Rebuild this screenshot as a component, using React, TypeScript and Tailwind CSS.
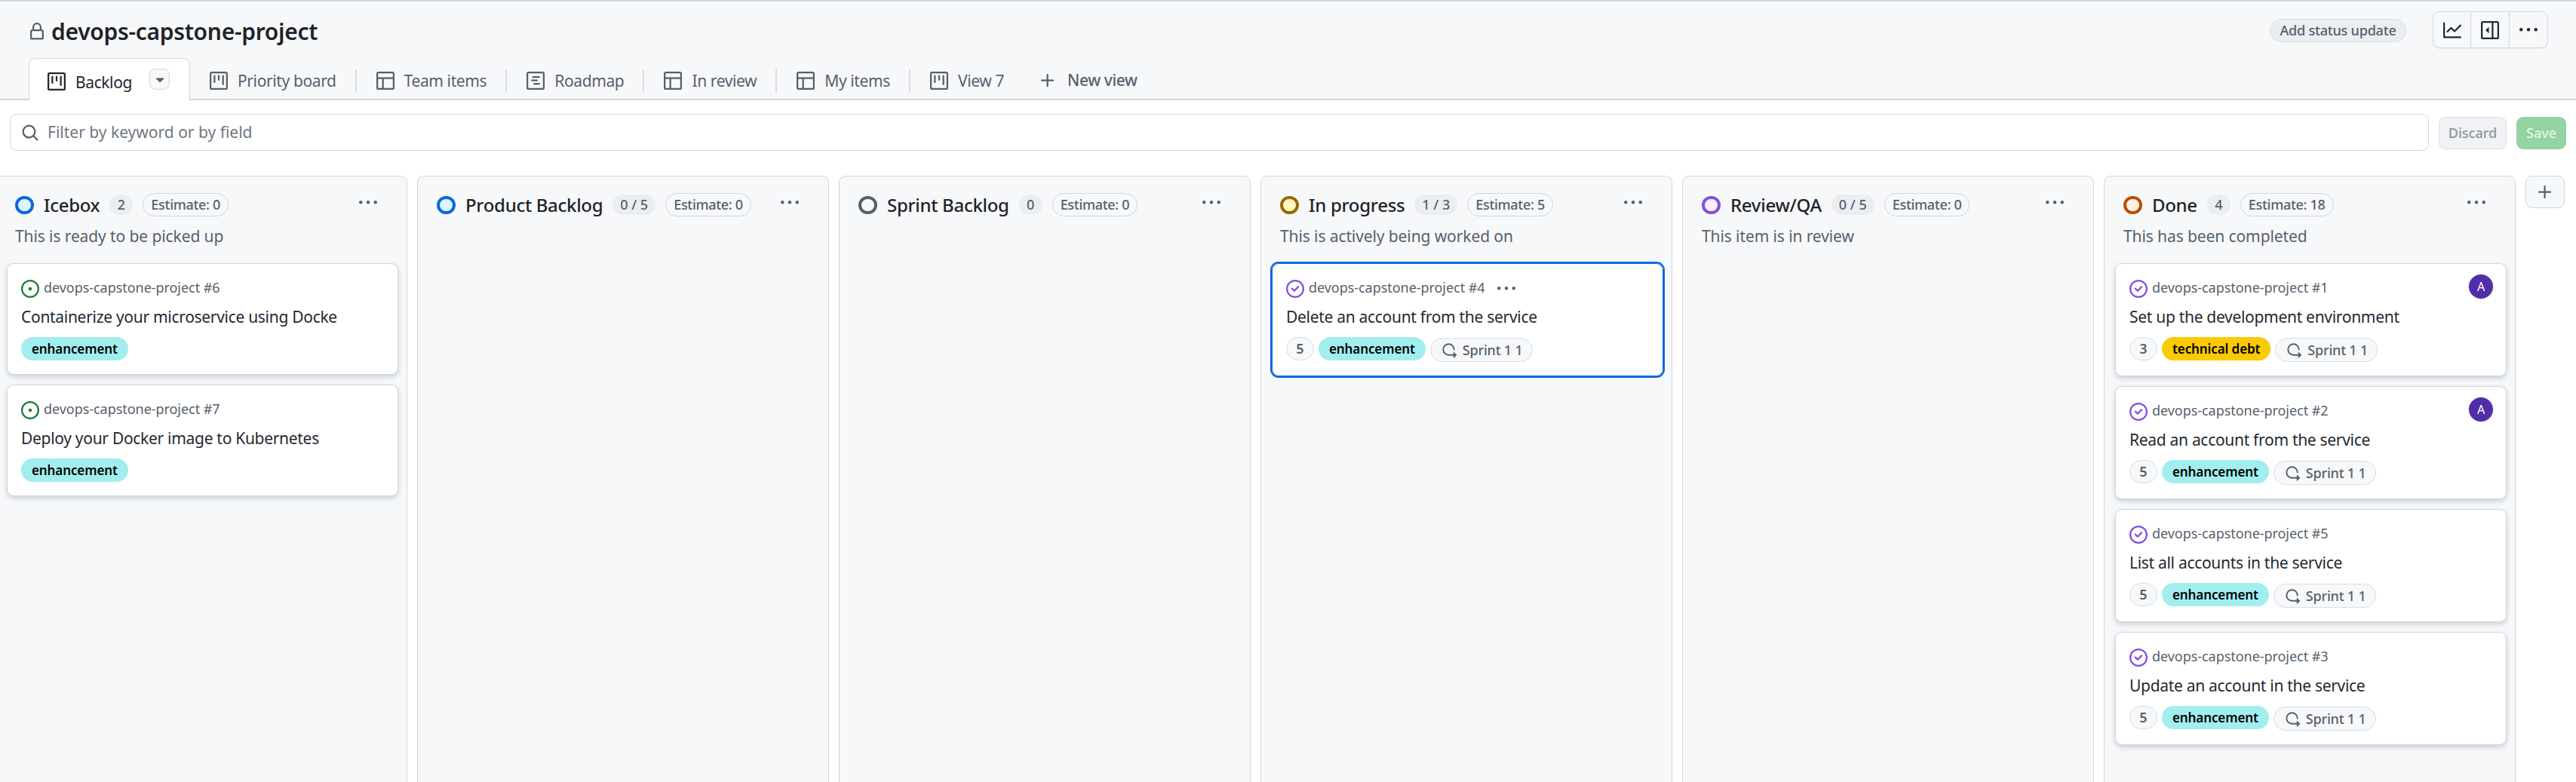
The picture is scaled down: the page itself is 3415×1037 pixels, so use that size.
import React from "react";

const P = {
  lock: "M4 4a4 4 0 0 1 8 0v2h.25c.966 0 1.75.784 1.75 1.75v5.5A1.75 1.75 0 0 1 12.25 15h-8.5A1.75 1.75 0 0 1 2 13.25v-5.5C2 6.784 2.784 6 3.75 6H4Zm8.25 3.5h-8.5a.25.25 0 0 0-.25.25v5.5c0 .138.112.25.25.25h8.5a.25.25 0 0 0 .25-.25v-5.5a.25.25 0 0 0-.25-.25ZM10.5 6V4a2.5 2.5 0 1 0-5 0v2Z",
  board: "M1.75 0h12.5C15.216 0 16 .784 16 1.75v12.5A1.75 1.75 0 0 1 14.25 16H1.75A1.75 1.75 0 0 1 0 14.25V1.75C0 .784.784 0 1.75 0ZM1.5 1.75v12.5c0 .138.112.25.25.25h12.5a.25.25 0 0 0 .25-.25V1.75a.25.25 0 0 0-.25-.25H1.75a.25.25 0 0 0-.25.25ZM11.75 3a.75.75 0 0 1 .75.75v7.5a.75.75 0 0 1-1.5 0v-7.5a.75.75 0 0 1 .75-.75Zm-8.25.75a.75.75 0 0 1 1.5 0v5.5a.75.75 0 0 1-1.5 0ZM8 3a.75.75 0 0 1 .75.75v3.5a.75.75 0 0 1-1.5 0v-3.5A.75.75 0 0 1 8 3Z",
  table: "M0 1.75C0 .784.784 0 1.75 0h12.5C15.216 0 16 .784 16 1.75v12.5A1.75 1.75 0 0 1 14.25 16H1.75A1.75 1.75 0 0 1 0 14.25ZM6.5 6.5v8h7.75a.25.25 0 0 0 .25-.25V6.5Zm8-1.5V1.75a.25.25 0 0 0-.25-.25H1.75a.25.25 0 0 0-.25.25V5Zm-13 1.5v7.75c0 .138.112.25.25.25H5v-8Z",
  roadmap: "M4.75 7a.75.75 0 0 0 0 1.5h4.5a.75.75 0 0 0 0-1.5h-4.5ZM5 4.75A.75.75 0 0 1 5.75 4h5.5a.75.75 0 0 1 0 1.5h-5.5A.75.75 0 0 1 5 4.75ZM6.75 10a.75.75 0 0 0 0 1.5h4.5a.75.75 0 0 0 0-1.5h-4.5ZM0 1.75C0 .784.784 0 1.75 0h12.5C15.216 0 16 .784 16 1.75v12.5A1.75 1.75 0 0 1 14.25 16H1.75A1.75 1.75 0 0 1 0 14.25Zm1.75-.25a.25.25 0 0 0-.25.25v12.5c0 .138.112.25.25.25h12.5a.25.25 0 0 0 .25-.25V1.75a.25.25 0 0 0-.25-.25Z",
  search: "M10.68 11.74a6 6 0 0 1-7.922-8.982 6 6 0 0 1 8.982 7.922l3.04 3.04a.749.749 0 0 1-.326 1.275.749.749 0 0 1-.734-.215ZM11.5 7a4.499 4.499 0 1 0-8.997 0A4.499 4.499 0 0 0 11.5 7Z",
  plus: "M7.75 2a.75.75 0 0 1 .75.75V7h4.25a.75.75 0 0 1 0 1.5H8.5v4.25a.75.75 0 0 1-1.5 0V8.5H2.75a.75.75 0 0 1 0-1.5H7V2.75A.75.75 0 0 1 7.75 2Z",
  graph: "M1.5 1.75V13.5h13.75a.75.75 0 0 1 0 1.5H.75a.75.75 0 0 1-.75-.75V1.75a.75.75 0 0 1 1.5 0Zm14.28 2.53-5.25 5.25a.75.75 0 0 1-1.06 0L7 7.06 4.28 9.78a.751.751 0 0 1-1.042-.018.751.751 0 0 1-.018-1.042l3.25-3.25a.75.75 0 0 1 1.06 0L10 7.94l4.72-4.72a.751.751 0 0 1 1.042.018.751.751 0 0 1 .018 1.042Z",
  sidebar: "m4.177 7.823 2.396-2.396A.25.25 0 0 1 7 5.604v4.792a.25.25 0 0 1-.427.177L4.177 8.177a.25.25 0 0 1 0-.354ZM1.75 0h12.5C15.216 0 16 .784 16 1.75v12.5A1.75 1.75 0 0 1 14.25 16H1.75A1.75 1.75 0 0 1 0 14.25V1.75C0 .784.784 0 1.75 0ZM1.5 1.75v12.5c0 .138.112.25.25.25H9.5v-13H1.75a.25.25 0 0 0-.25.25ZM11 14.5h3.25a.25.25 0 0 0 .25-.25V1.75a.25.25 0 0 0-.25-.25H11Z",
  kebab: "M8 9a1.5 1.5 0 1 0 0-3 1.5 1.5 0 0 0 0 3ZM1.5 9a1.5 1.5 0 1 0 0-3 1.5 1.5 0 0 0 0 3Zm13 0a1.5 1.5 0 1 0 0-3 1.5 1.5 0 0 0 0 3Z",
  opened: "M8 9.5a1.5 1.5 0 1 0 0-3 1.5 1.5 0 0 0 0 3ZM8 0a8 8 0 1 1 0 16A8 8 0 0 1 8 0ZM1.5 8a6.5 6.5 0 1 0 13 0 6.5 6.5 0 0 0-13 0Z",
  closed: "M11.28 6.78a.75.75 0 0 0-1.06-1.06L7.25 8.69 5.78 7.22a.75.75 0 0 0-1.06 1.06l2 2a.75.75 0 0 0 1.06 0l3.5-3.5ZM16 8A8 8 0 1 1 0 8a8 8 0 0 1 16 0Zm-1.5 0a6.5 6.5 0 1 0-13 0 6.5 6.5 0 0 0 13 0Z",
  iterations: "M2.5 7.25a4.75 4.75 0 0 1 9.5 0 .75.75 0 0 0 1.5 0 6.25 6.25 0 1 0-6.25 6.25H12v2.146c0 .223.27.335.427.177l2.896-2.896a.25.25 0 0 0 0-.354l-2.896-2.896a.25.25 0 0 0-.427.177V12H7.25A4.75 4.75 0 0 1 2.5 7.25Z",
  triangle: "m4.427 7.427 3.396 3.396a.25.25 0 0 0 .354 0l3.396-3.396A.25.25 0 0 0 11.396 7H4.604a.25.25 0 0 0-.177.427Z",
};

function Oct({ d, size = 24, className = "" }: { d: string; size?: number; className?: string }) {
  return (
    <svg viewBox="0 0 16 16" width={size} height={size} fill="currentColor" className={"shrink-0 " + className}>
      <path d={d} />
    </svg>
  );
}

const tabs = [
  { name: "Priority board", icon: P.board },
  { name: "Team items", icon: P.table },
  { name: "Roadmap", icon: P.roadmap },
  { name: "In review", icon: P.table },
  { name: "My items", icon: P.table },
  { name: "View 7", icon: P.board },
];

type Item = {
  repo: string;
  title: string;
  open?: boolean;
  points?: number;
  label: "enhancement" | "technical debt";
  sprint?: boolean;
  avatar?: boolean;
  focused?: boolean;
};

type Col = {
  name: string;
  count: string;
  estimate: number;
  desc?: string;
  ring: string;
  items: Item[];
};

const columns: Col[] = [
  {
    name: "Icebox", count: "2", estimate: 0, desc: "This is ready to be picked up",
    ring: "border-[#0969da] bg-[#ddf4ff]",
    items: [
      { repo: "devops-capstone-project #6", title: "Containerize your microservice using Docke", open: true, label: "enhancement" },
      { repo: "devops-capstone-project #7", title: "Deploy your Docker image to Kubernetes", open: true, label: "enhancement" },
    ],
  },
  { name: "Product Backlog", count: "0 / 5", estimate: 0, ring: "border-[#0969da] bg-[#ddf4ff]", items: [] },
  { name: "Sprint Backlog", count: "0", estimate: 0, ring: "border-[#57606a] bg-[#f6f8fa]", items: [] },
  {
    name: "In progress", count: "1 / 3", estimate: 5, desc: "This is actively being worked on",
    ring: "border-[#9a6700] bg-[#fff8c5]",
    items: [
      { repo: "devops-capstone-project #4", title: "Delete an account from the service", points: 5, label: "enhancement", sprint: true, focused: true },
    ],
  },
  { name: "Review/QA", count: "0 / 5", estimate: 0, desc: "This item is in review", ring: "border-[#8250df] bg-[#fbefff]", items: [] },
  {
    name: "Done", count: "4", estimate: 18, desc: "This has been completed",
    ring: "border-[#bc4c00] bg-[#fff1e5]",
    items: [
      { repo: "devops-capstone-project #1", title: "Set up the development environment", points: 3, label: "technical debt", sprint: true, avatar: true },
      { repo: "devops-capstone-project #2", title: "Read an account from the service", points: 5, label: "enhancement", sprint: true, avatar: true },
      { repo: "devops-capstone-project #5", title: "List all accounts in the service", points: 5, label: "enhancement", sprint: true },
      { repo: "devops-capstone-project #3", title: "Update an account in the service", points: 5, label: "enhancement", sprint: true },
    ],
  },
];

function Card({ item }: { item: Item }) {
  return (
    <div
      className={
        "rounded-[9px] bg-white pt-[20px] pb-[18px] pl-[18px] pr-[18px] " +
        (item.focused
          ? "border border-[#0969da] outline-2 outline-[#0969da]"
          : "border border-[#d0d7de] shadow-[0_3px_6px_rgba(140,149,159,0.4)]")
      }
    >
      <div className="flex h-[25px] items-center justify-between">
        <div className="flex items-center gap-[6px]">
          <Oct d={item.open ? P.opened : P.closed} className={item.open ? "text-[#1a7f37]" : "text-[#8250df]"} />
          <span className="mb-[2px] text-[18px] leading-[25px] tracking-[-0.05px] text-[#57606a]">{item.repo}</span>
          {item.focused && <Oct d={P.kebab} className="ml-[10px] text-[#57606a]" />}
        </div>
        {item.avatar && (
          <div className="mt-[-6px] mr-[-1px] flex h-[32px] w-[32px] items-center justify-center rounded-full bg-[#512da8] text-[16px] text-white shadow-[0_0_0_1px_rgba(31,35,40,0.1)]">
            A
          </div>
        )}
      </div>
      <div className="mt-[11px] mb-[13px] h-[28px] truncate text-[21px] leading-[28px] tracking-[-0.3px] text-[#24292f]">{item.title}</div>
      <div className="flex items-start gap-[6px]">
        {item.points !== undefined && (
          <span className="flex h-[31px] w-[37px] items-center justify-center rounded-full border border-[#d8dee4] bg-[#f6f8fa] text-[18px] font-semibold text-[#57606a]">
            {item.points}
          </span>
        )}
        <span
          className={
            "flex h-[31px] items-center rounded-full px-[14px] text-[17px] font-semibold tracking-[-0.1px] text-black " +
            (item.label === "enhancement" ? "bg-[#a2eeef]" : "bg-[#fbca04]")
          }
        >
          {item.label}
        </span>
        {item.sprint && (
          <span className="mt-[1px] flex h-[32px] items-center gap-[7px] rounded-full border border-[#d8dee4] bg-[#f6f8fa] pl-[14px] pr-[12px] text-[18px] font-medium tracking-[-0.2px] text-[#57606a]">
            <Oct d={P.iterations} size={21} />
            Sprint 1 1
          </span>
        )}
      </div>
    </div>
  );
}

function Column({ col }: { col: Col }) {
  return (
    <section className="flex h-full w-[546px] shrink-0 flex-col rounded-t-[9px] border border-b-0 border-[#d0d7de] bg-[#f6f8fa]">
      <div className="mt-[22px] flex h-[31px] items-center pl-[25px] pr-[39px]">
        <span className={"h-[24px] w-[25px] shrink-0 rounded-full border-[4px] " + col.ring} />
        <h2 className="ml-[13px] text-[24px] leading-[31px] font-medium tracking-[-0.3px] text-[#1f2328]">{col.name}</h2>
        <span className="ml-[13px] flex h-[27px] min-w-[31px] items-center justify-center rounded-full bg-[#eaeef2] px-[10px] text-[18px] font-medium text-[#57606a]">
          {col.count}
        </span>
        <span className="ml-[13px] flex h-[31px] items-center rounded-full border border-[#d0d7de] px-[10px] text-[18px] font-medium tracking-[-0.3px] text-[#57606a]">
          Estimate: {col.estimate}
        </span>
        <Oct d={P.kebab} className="ml-auto mt-[-6px] text-[#57606a]" />
      </div>
      <p className="mt-[10px] h-[32px] pl-[25px] text-[21px] leading-[32px] tracking-[-0.1px] text-[#57606a]">{col.desc}</p>
      <div className="mt-[20px] flex flex-col gap-[13px] pl-[14px] pr-[11px]">
        {col.items.map((it) => (
          <Card key={it.repo} item={it} />
        ))}
      </div>
    </section>
  );
}

export default function App() {
  return (
    <div className="flex h-screen w-full flex-col overflow-hidden bg-white font-['Noto_Sans','Liberation_Sans',sans-serif]">
      <header className="h-[133px] shrink-0 border-t-2 border-b-2 border-[#d0d7de] bg-[#f6f8fa]">
        <div className="flex h-[75px] items-start pr-[37px] pl-[37px]">
          <Oct d={P.lock} className="mt-[28px] text-[#57606a]" />
          <h1 className="mt-[20px] ml-[7px] text-[30px] leading-[40px] font-semibold tracking-[-0.3px] text-[#1f2328]">devops-capstone-project</h1>
          <button className="mt-[23px] ml-auto flex h-[31px] w-[181px] items-center justify-center rounded-full border border-[#d8dee4] bg-[#eaeef2] text-[18px] font-medium tracking-[-0.2px] text-[#57606a]">
            Add status update
          </button>
          <div className="mt-[13px] ml-[35px] flex h-[49px] items-stretch rounded-[9px] border border-[#d0d7de] bg-[#f6f8fa] text-[#24292f] shadow-[0_1px_0_rgba(31,35,40,0.04)]">
            <span className="flex w-[50px] items-center justify-center border-r border-[#d0d7de]"><Oct d={P.graph} /></span>
            <span className="flex w-[51px] items-center justify-center border-r border-[#d0d7de]"><Oct d={P.sidebar} /></span>
            <span className="flex w-[50px] items-center justify-center"><Oct d={P.kebab} /></span>
          </div>
        </div>
        <nav className="flex h-[56px] items-start pl-[38px]">
          <div className="flex h-[56px] w-[214px] items-start rounded-t-[9px] border border-b-0 border-[#d0d7de] bg-white pl-[24px] pt-[18px] text-[#24292f]">
            <Oct d={P.board} />
            <span className="ml-[13px] text-[21px] leading-[26px] tracking-[-0.4px]">Backlog</span>
            <span className="ml-auto mr-[26px] mt-[-5px] flex h-[28px] w-[27px] items-center justify-center rounded-[8px] border border-[#d0d7de] bg-[#f6f8fa] text-[#57606a]">
              <Oct d={P.triangle} />
            </span>
          </div>
          <div className="flex items-center pt-[14px] text-[#57606a]">
            {tabs.map((t, i) => (
              <React.Fragment key={t.name}>
                {i > 0 && <span className="h-[30px] w-[2px] bg-[#d8dee4]" />}
                <div className="flex h-[30px] items-center gap-[13px] pl-[26px] pr-[25px]">
                  <Oct d={t.icon} />
                  <span className="text-[21px] leading-[26px] tracking-[-0.38px] whitespace-nowrap">{t.name}</span>
                </div>
              </React.Fragment>
            ))}
            <div className="ml-[21px] flex items-center gap-[14px]">
              <Oct d={P.plus} />
              <span className="text-[21px] font-medium tracking-[-0.4px] whitespace-nowrap">New view</span>
            </div>
          </div>
        </nav>
      </header>

      <div className="flex h-[100px] shrink-0 items-start pl-[13px] pr-[13px] pt-[18px]">
        <div className="flex h-[49px] w-[3207px] items-center rounded-[9px] border border-[#d0d7de] bg-white pl-[14px]">
          <Oct d={P.search} className="text-[#57606a]" />
          <span className="ml-[11px] text-[21px] text-[#6e7781]">Filter by keyword or by field</span>
        </div>
        <button className="mt-[4px] ml-[13px] flex h-[43px] w-[90px] items-center justify-center rounded-[9px] border border-[#d8dee4] bg-[#f0f2f5] text-[18px] font-medium text-[#8c959f]">
          Discard
        </button>
        <button className="mt-[4px] ml-[13px] flex h-[43px] w-[66px] items-center justify-center rounded-[9px] bg-[#94d3a2] text-[18px] font-medium text-[#e6f5e9]">
          Save
        </button>
      </div>

      <main className="-ml-[6px] flex min-h-0 flex-1 items-stretch gap-[13px]">
        {columns.map((c) => (
          <Column key={c.name} col={c} />
        ))}
        <button className="flex h-[43px] w-[52px] shrink-0 items-center justify-center rounded-[9px] border border-[#d0d7de] bg-[#f6f8fa] text-[#57606a]">
          <Oct d={P.plus} />
        </button>
      </main>
    </div>
  );
}
